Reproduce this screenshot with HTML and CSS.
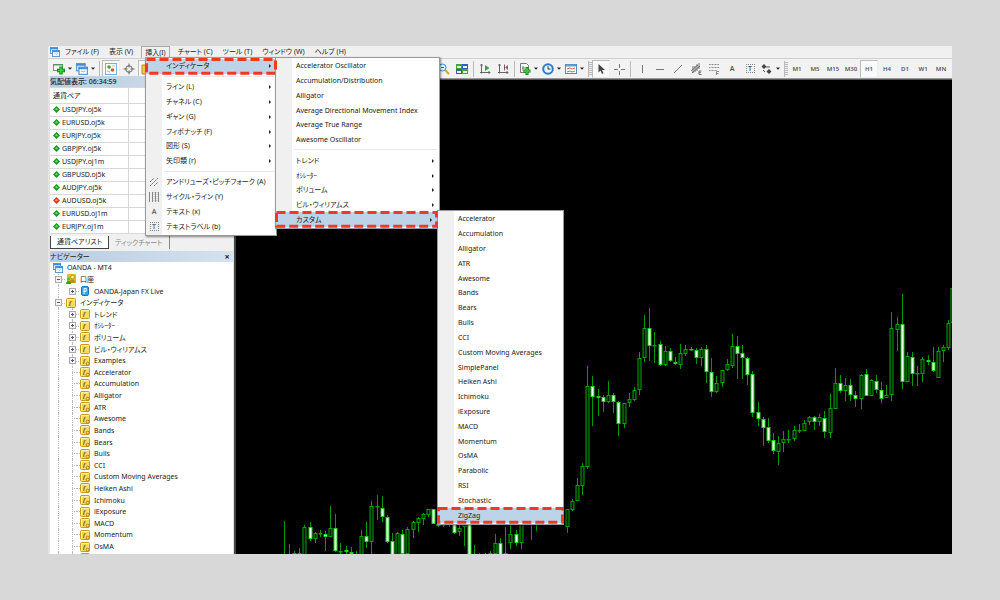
FILE: index.html
```html
<!DOCTYPE html>
<html lang="ja">
<head>
<meta charset="utf-8">
<title>OANDA - MT4</title>
<link rel="stylesheet" href="styles.css">
</head>
<body>
<svg class="defs" aria-hidden="true">
  <symbol id="i-win" viewBox="0 0 10 10"><rect x="0.5" y="0.5" width="7" height="6" fill="#e8f4ff" stroke="#5a9bd5"/><path d="M0 1.5h8" stroke="#3f8fd8" stroke-width="1.6"/><rect x="2.5" y="3.5" width="7" height="6" fill="#fff" stroke="#5a9bd5"/><path d="M2 4.4h8" stroke="#3f8fd8" stroke-width="1.6"/><path d="M4 7.5l1-1 1 1 2-1" stroke="#7aaedc" stroke-width=".7" fill="none"/></symbol>
  <symbol id="i-f" viewBox="0 0 10 10"><rect x="0.5" y="0.5" width="9" height="9" rx="1" fill="#f7dc62" stroke="#c99a1c"/><path d="M1.5 8.5v-7h7" stroke="#fff3b0" fill="none"/><text x="3" y="7" class="fglyph">f</text></symbol>
  <symbol id="i-fg" viewBox="0 0 10 10"><use href="#i-f"/><circle cx="7.7" cy="7.7" r="1.5" fill="#ffe15c" stroke="#a87406" stroke-width=".9"/></symbol>
  <symbol id="i-acct" viewBox="0 0 10 10"><rect x="1" y="0" width="9" height="9" rx="1" fill="#e4b72d"/><circle cx="6.5" cy="3" r="1.8" fill="#fff0a0" stroke="#8c6a10" stroke-width=".5"/><path d="M3.7 9c0-5 5.6-5 5.6 0z" fill="#c78d12"/><circle cx="2.5" cy="5" r="1.6" fill="#45c737"/><path d="M0 10c0-4 5-4 5 0z" fill="#22a51e"/></symbol>
  <symbol id="i-srv" viewBox="0 0 10 10"><rect x="1.5" y="0.5" width="7" height="9" rx="1.5" fill="#35a4ea" stroke="#1978bd"/><path d="M4 8V2.5h2.2v2.8H4" stroke="#fff" fill="none"/></symbol>
  <symbol id="i-up" viewBox="0 0 7 7"><path d="M3.5 0L7 3.5 3.5 7 0 3.5z" fill="#169a1c"/><path d="M3.500 1.800L5 3.500 3.500 4.500 2 3.500z" fill="#6bdc68"/></symbol>
  <symbol id="i-down" viewBox="0 0 7 7"><path d="M3.5 0L7 3.5 3.5 7 0 3.5z" fill="#d23c1a"/><path d="M3.500 1.800L5 3.500 3.500 4.500 2 3.500z" fill="#ff9468"/></symbol>
  <symbol id="i-dd" viewBox="0 0 4 3"><path d="M0 .5h4L2 2.8z" fill="#222"/></symbol>
</svg>

<main class="app">
  <nav class="menubar" aria-label="メニュー">
    <svg class="ic10"><use href="#i-win"/></svg>
    <button>ファイル (F)</button><button>表示 (V)</button><button class="open">挿入(I)</button><button>チャート (C)</button><button>ツール (T)</button><button>ウィンドウ (W)</button><button>ヘルプ (H)</button>
  </nav>

  <div class="toolbar" role="toolbar" aria-label="ツール">
    <div class="tools file">
      <button class="drop" aria-label="新規"><svg class="ic12" viewBox="0 0 12 12"><rect x="0.5" y="1.5" width="9" height="6" fill="#fff" stroke="#6a9a78"/><path d="M0 2h10" stroke="#4a8b66"/><path d="M8 3.500v8M4 7.500h8" stroke="#0a8f14" stroke-width="3.400"/><path d="M8 4.500v6M5 7.500h6" stroke="#3fd43a" stroke-width="1.600"/></svg><svg class="dd"><use href="#i-dd"/></svg></button>
      <button class="drop" aria-label="プロファイル"><svg class="ic12"><use href="#i-win"/></svg><svg class="dd"><use href="#i-dd"/></svg></button>
      <i class="sep"></i>
      <button class="pressed" aria-label="気配値"><svg class="ic12" viewBox="0 0 12 12"><rect x="0.5" y="0.5" width="11" height="11" fill="#fff" stroke="#79aee0"/><circle cx="4" cy="4" r="1.800" fill="#32ad2e"/><circle cx="7.500" cy="7" r="1.800" fill="#e2552d"/><path d="M2 8l3 1M7 3h3" stroke="#a9c8a0"/></svg></button>
      <button aria-label="データ"><svg class="ic12" viewBox="0 0 12 12" fill="none" stroke="#666"><circle cx="6" cy="6" r="3.300"/><path d="M6 0.500v4M6 7.500v4M.5 6h4M7.500 6h4"/></svg></button>
      <button class="pressed" aria-label="ナビゲーター"><svg class="ic12" viewBox="0 0 12 12"><path d="M1 2h4l1 2h5v7H1z" fill="#f3c94c" stroke="#b98a1c"/></svg></button>
    </div>
    <div class="tools view">
      <button aria-label="縮小"><svg class="ic12" viewBox="0 0 12 12"><path d="M7 7l4 4" stroke="#d7a72b" stroke-width="2"/><circle cx="4.500" cy="4.500" r="3.500" fill="#d9f0ff" stroke="#3d8ec9"/><path d="M3 4.500h3" stroke="#2a6ea5"/></svg></button>
      <button aria-label="整列"><svg class="ic12" viewBox="0 0 12 12"><path d="M0 1h6v5H0zM6 6h6v5H6z" fill="#3fa53a"/><path d="M6 1h6v5H6zM0 6h6v5H0z" fill="#2f62b5"/><path d="M1 3h4v2H1zM7 3h4v2H7zM1 8h4v2H1zM7 8h4v2H7z" fill="#e6f3e3"/></svg></button>
      <i class="sep"></i>
      <button aria-label="自動スクロール"><svg class="ic12" viewBox="0 0 12 12" fill="none" stroke="#666"><path d="M2.500 1v9.500M1 9.500h10M1.500 2.500l1-1.500 1 1.500M9.500 8l1.500 1.500L9.500 11"/><path d="M6 2l4.500 3L6 8z" fill="#2fae35" stroke="none"/></svg></button>
      <button aria-label="チャートシフト"><svg class="ic12" viewBox="0 0 12 12" fill="none" stroke="#666"><path d="M2.500 1v9.500M1 9.500h10M1.500 2.500l1-1.500 1 1.500M9.500 8l1.500 1.500L9.500 11M7.500 1.500v6"/><path d="M8 4.500l3-2.500v5z" fill="#d2472b" stroke="none"/></svg></button>
      <i class="sep"></i>
      <button class="drop" aria-label="インディケータリスト"><svg class="ic12" viewBox="0 0 12 12"><path d="M1.500.5h6l2 2v7h-8z" fill="#fff" stroke="#777"/><path d="M4 3v5M3 5h3" stroke="#777"/><path d="M8 4v8M4.500 8h7" stroke="#0a8f14" stroke-width="3"/><path d="M8 5v6M5.200 8h5.600" stroke="#3fd43a" stroke-width="1.400"/></svg><svg class="dd"><use href="#i-dd"/></svg></button>
      <button class="drop" aria-label="時間"><svg class="ic12" viewBox="0 0 12 12"><circle cx="6" cy="6" r="4.800" fill="#e9f5ff" stroke="#2a7bd0" stroke-width="2"/><path d="M6 3.200V6h2.500" stroke="#333" fill="none"/></svg><svg class="dd"><use href="#i-dd"/></svg></button>
      <button class="drop" aria-label="テンプレート"><svg class="ic12" viewBox="0 0 12 12"><rect x="0.500" y="1.500" width="11" height="9" fill="#fff" stroke="#4f8cc4"/><path d="M1 2.500h10" stroke="#5f9fd8" stroke-width="2"/><path d="M2 6l3-1 2 1 3-1" stroke="#d0664a" fill="none"/><path d="M2 9l3-1 2 1 3-1" stroke="#58a05a" fill="none"/></svg><svg class="dd"><use href="#i-dd"/></svg></button>
      <i class="sep end"></i><i class="grip"></i>
    </div>
    <div class="tools draw">
      <button class="pressed" aria-label="カーソル"><svg class="ic12" viewBox="0 0 12 12"><path d="M3.500 1v8.500l2-2 1.500 3.500 1.500-.7L7 7h3z" fill="#444"/></svg></button>
      <button aria-label="クロスヘア"><svg class="ic12" viewBox="0 0 12 12" stroke="#777"><path d="M6.500 1v4M6.500 8v4M1 6.500h4M8 6.500h4"/></svg></button>
      <i class="sep"></i>
      <button aria-label="垂直線"><svg class="ic12" viewBox="0 0 12 12" stroke="#777"><path d="M6.500 2v8"/></svg></button>
      <button aria-label="水平線"><svg class="ic12" viewBox="0 0 12 12" stroke="#777"><path d="M2 6.500h8"/></svg></button>
      <button aria-label="トレンドライン"><svg class="ic12" viewBox="0 0 12 12" stroke="#777"><path d="M2 10l8-8"/></svg></button>
      <button aria-label="チャネル"><svg class="ic12" viewBox="0 0 12 12" stroke="#555" stroke-width=".8" fill="none"><path d="M1 8l7-6M2 10l8-7M3 3v7M5 3v6M7 1v7M9 0v6M9 8h2.500M9 9.700h2M9 11.500h2.500M9 8v3.500"/></svg></button>
      <button aria-label="フィボナッチ"><svg class="ic12" viewBox="0 0 12 12" stroke="#888" fill="none"><path d="M1 1.500h10M1 4.500h10M1 7.500h8" stroke-dasharray="1 .5"/><path d="M8.500 12V8.500H11M8.500 10.500h2"/></svg></button>
      <button class="glyph">A</button>
      <button class="glyph" aria-label="テキストラベル"><span class="tbox">T</span></button>
      <button class="drop" aria-label="矢印"><svg class="ic12" viewBox="0 0 12 12"><path d="M3 1l2.500 2.500L3 6 .5 3.500zM8 6l2.500 2.500L8 11 5.500 8.500z" fill="#444"/><path d="M5 4h4M2 7l2 2" stroke="#555"/></svg><svg class="dd"><use href="#i-dd"/></svg></button>
      <i class="sep end"></i><i class="grip"></i>
    </div>
    <div class="tools periods">
      <button>M1</button><button>M5</button><button>M15</button><button>M30</button><button class="pressed">H1</button><button>H4</button><button>D1</button><button>W1</button><button>MN</button>
    </div>
  </div>

  <div class="work">
    <aside class="side">
      <section class="watch">
        <h2 class="title">気配値表示: 06:34:59</h2>
        <table>
          <thead><tr><th>通貨ペア</th><th></th></tr></thead>
          <tbody>
            <tr><td><svg><use href="#i-up"/></svg>USDJPY.oj5k</td><td></td></tr>
            <tr><td><svg><use href="#i-up"/></svg>EURUSD.oj5k</td><td></td></tr>
            <tr><td><svg><use href="#i-up"/></svg>EURJPY.oj5k</td><td></td></tr>
            <tr><td><svg><use href="#i-up"/></svg>GBPJPY.oj5k</td><td></td></tr>
            <tr><td><svg><use href="#i-up"/></svg>USDJPY.oj1m</td><td></td></tr>
            <tr><td><svg><use href="#i-up"/></svg>GBPUSD.oj5k</td><td></td></tr>
            <tr><td><svg><use href="#i-up"/></svg>AUDJPY.oj5k</td><td></td></tr>
            <tr><td><svg><use href="#i-down"/></svg>AUDUSD.oj5k</td><td></td></tr>
            <tr><td><svg><use href="#i-up"/></svg>EURUSD.oj1m</td><td></td></tr>
            <tr><td><svg><use href="#i-up"/></svg>EURJPY.oj1m</td><td></td></tr>
          </tbody>
        </table>
      </section>
      <div class="tabs"><button class="active">通貨ペアリスト</button><button>ティックチャート</button></div>
      <section class="navi">
        <h2 class="title">ナビゲーター<button class="close" aria-label="閉じる">×</button></h2>
        <div class="treebox">
        <ul class="tree">
          <li class="l0"><svg><use href="#i-win"/></svg>OANDA - MT4</li>
          <li class="l1"><i class="minus"></i><svg><use href="#i-acct"/></svg>口座</li>
          <li class="l2"><i class="plus"></i><svg><use href="#i-srv"/></svg>OANDA-Japan FX Live</li>
          <li class="l1"><i class="minus"></i><svg><use href="#i-f"/></svg>インディケータ</li>
          <li class="l2 line"><i class="plus"></i><svg><use href="#i-f"/></svg>トレンド</li>
          <li class="l2 line"><i class="plus"></i><svg><use href="#i-f"/></svg>ｵｼﾚｰﾀｰ</li>
          <li class="l2 line"><i class="plus"></i><svg><use href="#i-f"/></svg>ボリューム</li>
          <li class="l2 line"><i class="plus"></i><svg><use href="#i-f"/></svg>ビル・ウィリアムス</li>
          <li class="l2 line"><i class="plus"></i><svg><use href="#i-fg"/></svg>Examples</li>
          <li class="l2 line"><i class="twig"></i><svg><use href="#i-fg"/></svg>Accelerator</li>
          <li class="l2 line"><i class="twig"></i><svg><use href="#i-fg"/></svg>Accumulation</li>
          <li class="l2 line"><i class="twig"></i><svg><use href="#i-fg"/></svg>Alligator</li>
          <li class="l2 line"><i class="twig"></i><svg><use href="#i-fg"/></svg>ATR</li>
          <li class="l2 line"><i class="twig"></i><svg><use href="#i-fg"/></svg>Awesome</li>
          <li class="l2 line"><i class="twig"></i><svg><use href="#i-fg"/></svg>Bands</li>
          <li class="l2 line"><i class="twig"></i><svg><use href="#i-fg"/></svg>Bears</li>
          <li class="l2 line"><i class="twig"></i><svg><use href="#i-fg"/></svg>Bulls</li>
          <li class="l2 line"><i class="twig"></i><svg><use href="#i-fg"/></svg>CCI</li>
          <li class="l2 line"><i class="twig"></i><svg><use href="#i-fg"/></svg>Custom Moving Averages</li>
          <li class="l2 line"><i class="twig"></i><svg><use href="#i-fg"/></svg>Heiken Ashi</li>
          <li class="l2 line"><i class="twig"></i><svg><use href="#i-fg"/></svg>Ichimoku</li>
          <li class="l2 line"><i class="twig"></i><svg><use href="#i-fg"/></svg>iExposure</li>
          <li class="l2 line"><i class="twig"></i><svg><use href="#i-fg"/></svg>MACD</li>
          <li class="l2 line"><i class="twig"></i><svg><use href="#i-fg"/></svg>Momentum</li>
          <li class="l2 line"><i class="twig"></i><svg><use href="#i-fg"/></svg>OsMA</li>
          <li class="l2 line"><i class="twig"></i><svg><use href="#i-fg"/></svg></li>
        </ul>
        </div>
      </section>
    </aside>
    <section class="chart" aria-label="チャート"><svg id="candles" width="716" height="474" viewBox="236 80 716 474"></svg></section>
  </div>

  <div class="menu m-insert" role="menu">
    <button class="sub hot">インディケータ<svg class="mark" aria-hidden="true"><rect x="1.500" y="1.500" /></svg></button>
    <hr>
    <button class="sub">ライン (L)</button>
    <button class="sub">チャネル (C)</button>
    <button class="sub">ギャン (G)</button>
    <button class="sub">フィボナッチ (F)</button>
    <button class="sub">図形 (S)</button>
    <button class="sub">矢印類 (r)</button>
    <hr>
    <button><svg class="mi" viewBox="0 0 10 10" stroke="#777" fill="none"><path d="M1 5l4-4M1 9l8-8M5 9l4-4" stroke-dasharray="2 .4"/></svg>アンドリューズ・ピッチフォーク (A)</button>
    <button><svg class="mi" viewBox="0 0 10 10" stroke="#888" fill="none"><path d="M.5 0v10M3.500 0v10M6.500 0v10M9.500 0v10"/><path d="M5 0v10M8 0v10" stroke-dasharray="1 1" stroke-width=".5"/></svg>サイクル・ライン (Y)</button>
    <button><span class="mi">A</span>テキスト (x)</button>
    <button><span class="mi"><span class="tbox">T</span></span>テキストラベル (b)</button>
  </div>

  <div class="menu m-indicator" role="menu">
    <button>Accelerator Oscillator</button>
    <button>Accumulation/Distribution</button>
    <button>Alligator</button>
    <button>Average Directional Movement Index</button>
    <button>Average True Range</button>
    <button>Awesome Oscillator</button>
    <hr>
    <button class="sub">トレンド</button>
    <button class="sub">ｵｼﾚｰﾀｰ</button>
    <button class="sub">ボリューム</button>
    <button class="sub">ビル・ウィリアムス</button>
    <button class="sub hot">カスタム<svg class="mark" aria-hidden="true"><rect x="1.500" y="1.500"/></svg></button>
  </div>

  <div class="menu m-custom" role="menu">
    <button>Accelerator</button><button>Accumulation</button><button>Alligator</button><button>ATR</button><button>Awesome</button><button>Bands</button><button>Bears</button><button>Bulls</button><button>CCI</button><button>Custom Moving Averages</button><button>SimplePanel</button><button>Heiken Ashi</button><button>Ichimoku</button><button>iExposure</button><button>MACD</button><button>Momentum</button><button>OsMA</button><button>Parabolic</button><button>RSI</button><button>Stochastic</button>
    <button class="hot">ZigZag<svg class="mark" aria-hidden="true"><rect x="1.500" y="1.500"/></svg></button>
  </div>
</main>
<script src="chart.js"></script>
</body>
</html>
```
FILE: styles.css
```css
* { box-sizing: border-box; }
body {
  margin: 0;
  padding: 46px 48px;
  height: 100vh;
  background: #d8d8d8;
  color: #222;
  font: 7px/10px "Noto Sans", "Noto Sans CJK JP", sans-serif;
  font-feature-settings: "palt";
  overflow: hidden;
}
button { border: 0; margin: 0; padding: 0; background: none; color: inherit; font: inherit; font-feature-settings: inherit; white-space: nowrap; }
svg { flex: none; display: block; }
.defs { display: none; }
.fglyph { font: italic bold 7px "Liberation Serif", serif; fill: #7a5600; }
.ic10 { width: 10px; height: 10px; }
.ic12 { width: 12px; height: 12px; }

.app { position: relative; height: 100%; display: flex; flex-direction: column; background: #f0f0f0; }

.menubar { flex: none; height: 12px; display: flex; align-items: center; padding-left: 2px; }
.menubar button { height: 12px; padding: 0 5px; }
.menubar .open { border: 1px solid #aaa; border-bottom: 0; margin: 0 3px; padding: 0 3px; }

.toolbar { flex: none; height: 21px; display: flex; align-items: center; border-top: 1px solid #d0d0d0; border-bottom: 1px solid #999; background: #f2f2f2; }
.tools { display: flex; align-items: center; flex: none; height: 100%; }
.tools button { flex: none; width: 18px; height: 18px; display: flex; align-items: center; justify-content: center; }
.tools .drop { width: 23px; gap: 3px; }
.dd { width: 4px; height: 3px; }
.tools .pressed { background: #fafafa; border: 1px solid #bbb; border-right-color: #eee; border-bottom-color: #eee; }
.sep { flex: none; width: 1px; height: 16px; margin: 0 2px; background: #bbb; }
.sep.end { margin-right: 0; }
.grip { flex: none; width: 3px; height: 14px; background: repeating-linear-gradient(#bbb 0 1px, #eee 1px 2px); }
.file { width: 387px; padding-left: 3px; overflow: hidden; }
.glyph { font-weight: 600; color: #555; }
.tbox { display: inline-flex; width: 9px; height: 9px; align-items: center; justify-content: center; border: 1px dotted #888; line-height: 7px; }
.periods { color: #555; font-size: 6px; font-weight: 600; }

.work { flex: 1; min-height: 0; display: flex; }
.side { flex: none; width: 188px; display: flex; flex-direction: column; padding: 0 1px 0 2px; background: #e4e4e4; border-right: 2px solid #444; margin-top: -3px; }
.title { flex: none; display: flex; align-items: center; justify-content: space-between; margin: 0; height: 11px; font-size: 7px; font-weight: 400; background: linear-gradient(90deg, #b9cce0, #d5e2ef); }
.watch .title { font-weight: 500; }
.close { width: 12px; font-size: 9px; font-weight: 700; }
table { width: 100%; border-collapse: collapse; background: #fff; table-layout: fixed; }
th, td { height: 13px; padding: 0 0 0 3px; border: 1px solid #d8d8d8; border-left: 0; text-align: left; font-weight: 400; }
th { height: 16px; }
th:first-child { width: 78px; }
td svg { display: inline-block; width: 7px; height: 7px; margin-right: 2px; vertical-align: -1px; }

.tabs { flex: none; display: flex; height: 17px; align-items: flex-start; padding-top: 2px; color: #888; background: #f0f0f0; }
.tabs button { height: 13px; padding: 0 6px; border-right: 1px solid #888; }
.tabs .active { background: #fff; color: #222; border: 1px solid #444; border-top: 0; }

.navi { flex: 1; min-height: 0; display: flex; flex-direction: column; }
.treebox { flex: 1; min-height: 0; overflow: hidden; background: #fff; }
.tree { display: grid; grid-auto-rows: 1fr; height: 302px; margin: 0; padding: 0; list-style: none; }
.tree li { display: flex; align-items: center; gap: 4px; min-height: 0; position: relative; line-height: 11px; white-space: nowrap; }
.tree svg { width: 10px; height: 10px; }
.l0 { padding-left: 3px; }
.l1 { padding-left: 5px; }
.l2 { padding-left: 19px; }
.l1::before, .l2::before { content: ""; position: absolute; left: 8px; top: 0; bottom: 0; border-left: 1px dotted #bbb; }
.line::after { content: ""; position: absolute; left: 22px; top: 0; bottom: 0; border-left: 1px dotted #bbb; }
.plus, .minus, .twig { flex: none; width: 7px; height: 7px; position: relative; z-index: 1; }
.plus, .minus { border: 1px solid #aaa; background: linear-gradient(#557, #557) center / 3px 1px no-repeat #f4f4f4; }
.plus { background: linear-gradient(#557, #557) center / 3px 1px no-repeat, linear-gradient(#557, #557) center / 1px 3px no-repeat #f4f4f4; }
.twig { background: repeating-linear-gradient(90deg, #bbb 0 1px, #fff 1px 2px) right / 4px 1px no-repeat; }
.plus::after, .minus::after, .twig::after { content: ""; position: absolute; left: 100%; top: 50%; width: 4px; border-top: 1px dotted #bbb; }
.twig::after { top: 3px; }

.chart { flex: 1; min-width: 0; overflow: hidden; border-top: 1px solid #555; background: #000; }
.wick { stroke: #009a00; }
.hollow { fill: #001c00; stroke: #00a000; }
.filled { fill: #e8ffe8; stroke: #1fd01f; }

.menu { position: absolute; display: flex; flex-direction: column; padding: 1px 0; border: 1px solid #999; background: linear-gradient(90deg, #f0f0f0 16px, #fff 16px); box-shadow: 1px 1px 2px rgba(0, 0, 0, .45); }
.menu button { flex: 1; min-height: 0; position: relative; display: flex; align-items: center; padding-left: 20px; text-align: left; }
.menu hr { flex: none; width: auto; height: 1px; margin: 2px 2px 3px 18px; border: 0; background: #e8e8e8; align-self: stretch; }
.sub::after { content: ""; position: absolute; right: 5px; top: 50%; margin-top: -2px; border: 2px solid transparent; border-left: 2px solid #222; border-right: 0; }
.menu .hot { background: #bcd3e8; }
.mi { position: absolute; left: 3px; width: 10px; height: 10px; display: flex; align-items: center; justify-content: center; font-weight: 600; color: #666; }
.mark { position: absolute; left: -1px; top: -1px; width: calc(100% + 2px); height: calc(100% + 2px); z-index: 2; }
.mark rect { width: calc(100% - 3px); height: calc(100% - 3px); fill: none; stroke: #f0391f; stroke-width: 3px; stroke-dasharray: 9 4; }
.m-insert { left: 97px; top: 11px; width: 132px; height: 179px; }
.m-indicator { left: 227px; top: 11px; width: 165px; height: 172px; }
.m-indicator .hot { margin-right: 2px; }
.m-custom { left: 389px; top: 164px; width: 127px; height: 315px; }
```
FILE: chart.js
```js
// Each candle: x centre, high, body top, body bottom, low, filled (1) or hollow (0).
const candles = [
  [284,521,554,554,556,0],[289,544,554,554,556,0],[294,551,553,556,556,0],[299,548,553,556,556,0],
  [304,525,527,556,556,0],[310,522,527,539,541,1],[315,532,533,539,543,0],[320,530,533,534,537,0],
  [325,531,534,537,551,1],[330,506,528,537,537,0],[335,514,528,551,552,1],[340,543,551,552,554,0],
  [346,546,550,552,554,1],[351,547,552,554,555,1],[356,551,555,556,556,0],[361,530,536,556,556,0],
  [366,522,536,542,548,1],[371,501,506,542,554,0],[377,495,506,507,520,0],[382,496,508,517,522,1],
  [387,515,517,542,543,1],[392,533,541,556,556,1],[397,532,533,556,556,0],[402,530,534,554,555,1],
  [407,527,529,554,555,0],[413,521,522,530,538,0],[418,517,518,523,532,0],[423,513,514,519,525,0],
  [428,509,509,515,517,0],[433,509,509,524,524,1],[438,515,524,526,527,1],[443,515,524,525,527,1],
  [449,515,523,525,527,0],[454,515,515,533,534,1],[459,515,528,532,536,0],[464,515,515,527,546,0],
  [469,515,515,556,556,1],[474,545,555,556,556,0],[479,553,555,556,556,0],[485,553,555,556,556,0],
  [490,551,553,556,556,0],[495,534,543,554,556,0],[500,538,543,556,556,1],[505,527,553,556,556,0],
  [510,515,534,543,549,0],[516,530,534,543,546,1],[521,515,515,543,549,0],[531,515,515,520,540,0],
  [536,515,515,520,531,0],[567,509,509,527,533,0],
  [572,499,501,510,511,0],[577,478,485,501,501,0],[582,463,466,486,495,0],[587,366,386,467,469,0],
  [592,376,386,397,426,1],[598,389,396,398,416,1],[603,395,397,402,412,1],[608,381,395,402,403,0],
  [613,393,395,402,413,1],[618,401,402,424,436,1],[624,403,403,424,428,0],[629,393,399,403,407,0],
  [634,387,390,400,401,0],[639,352,358,390,395,0],[644,315,328,358,362,0],[649,308,328,346,361,1],
  [654,332,345,346,363,0],[660,341,344,365,366,1],[665,346,351,365,366,0],[670,348,351,361,362,1],
  [675,357,362,364,365,1],[680,344,353,365,369,0],[685,345,349,354,356,0],[691,347,349,350,351,1],
  [696,348,350,358,364,1],[701,347,349,358,366,0],[706,345,349,372,383,1],[711,358,372,392,397,1],
  [716,376,383,392,393,0],[722,370,370,383,387,0],[727,359,364,370,371,0],[732,334,346,366,368,0],
  [737,336,346,354,379,1],[742,345,353,358,379,1],[747,357,358,375,385,1],[752,371,374,413,417,1],
  [758,402,412,419,426,1],[763,417,419,428,446,1],[768,418,427,441,443,1],[773,433,440,451,454,1],
  [778,436,443,452,465,0],[783,431,439,443,452,0],[788,430,439,440,443,0],[794,426,430,439,441,0],
  [799,424,430,431,433,0],[804,420,423,431,431,0],[809,416,417,422,425,0],[814,416,417,422,430,1],
  [819,414,417,422,426,0],[824,411,418,432,438,1],[830,394,408,433,438,0],[835,368,383,409,409,0],
  [840,375,383,391,393,1],[845,378,385,391,401,0],[850,379,385,395,401,1],[855,391,395,399,407,1],
  [861,374,375,399,409,0],[866,369,374,396,396,1],[871,379,380,396,396,0],[876,375,381,390,393,1],
  [881,382,390,399,403,1],[886,385,395,398,398,0],[891,312,328,395,401,0],[897,317,324,330,351,0],
  [902,294,324,382,389,1],[907,352,356,382,382,0],[912,352,357,374,386,1],[917,366,373,374,386,0],
  [922,357,359,374,382,0],[928,355,360,362,365,1],[933,347,362,371,372,1],[938,347,351,378,378,0],
  [943,345,347,351,362,0],[948,320,323,348,350,0],[952,288,288,323,323,0]
];
const svg = document.getElementById("candles");
const add = (name, attrs) => {
  const el = document.createElementNS("http://www.w3.org/2000/svg", name);
  for (const key in attrs) el.setAttribute(key, attrs[key]);
  svg.append(el);
};
for (const [x, high, top, bottom, low, filled] of candles) {
  const mid = x + 0.5;
  add("path", { class: "wick", d: `M${mid} ${high}V${low}` });
  add("rect", { class: filled ? "filled" : "hollow", x: x - 1, y: top + 0.5, width: 3, height: Math.max(bottom - top - 1, 0.5) });
}
```
